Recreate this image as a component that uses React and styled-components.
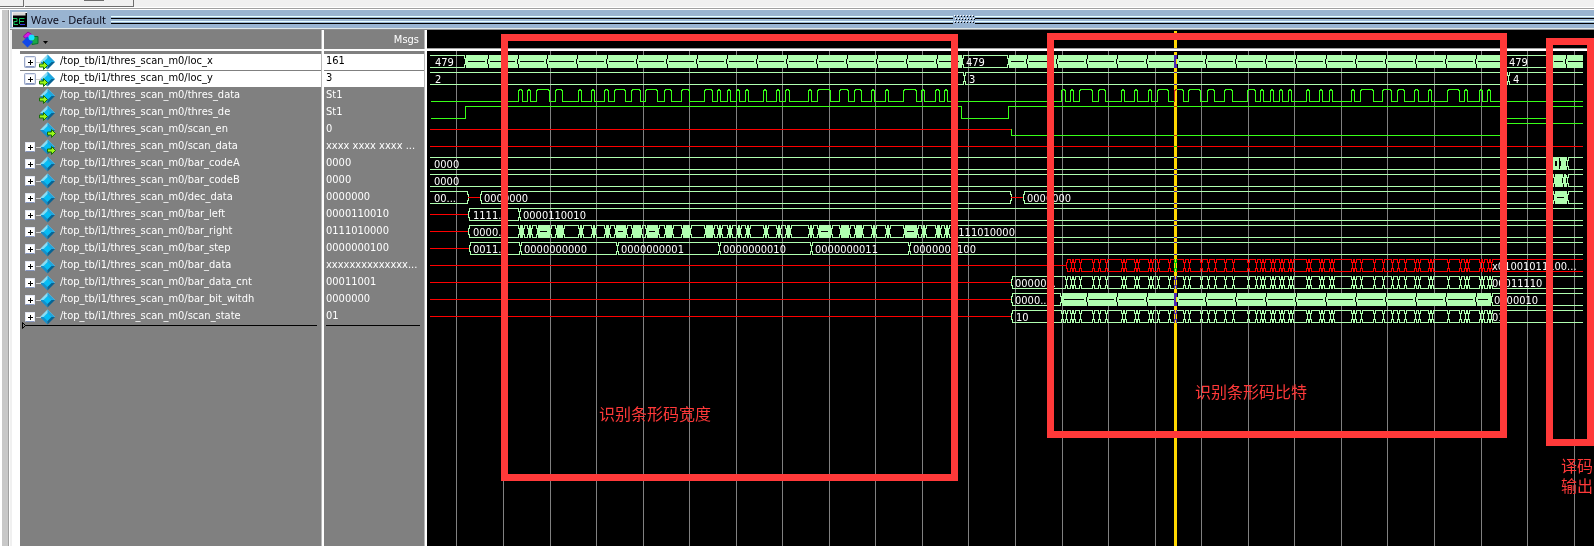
import React from "react";
import styled, { createGlobalStyle } from "styled-components";

const MINT = "#b0ffb0";
const GREEN = "#38ff18";
const RED = "#ff0000";
const UI_FONT = '"DejaVu Sans Condensed", "Noto Sans", sans-serif';

const GlobalStyle = createGlobalStyle`
  * { box-sizing: border-box; }
  body { margin: 0; background: #f0f0f0; font-family: ${UI_FONT}; font-size: 11px; overflow: hidden; }
`;

const Page = styled.div`
  display: flex;
  flex-direction: column;
  height: 100vh;
`;

const ToolStrip = styled.div`
  display: flex;
  gap: 1px;
  height: 8px;
  flex: none;
  border-bottom: 1px solid #fff;
`;

const ToolBox = styled.div`
  width: ${(p) => p.$width}px;
  height: 7px;
  border: solid #6e6e6e;
  border-width: 0 1px 1px 0;
  padding-left: ${(p) => p.$inset}px;
`;

const ToolMark = styled.div`
  width: 20px;
  height: 1px;
  background: #6e6e6e;
`;

const Workspace = styled.div`
  display: flex;
  flex: 1;
  min-height: 0;
  border-top: 1px solid #a0a0a0;
`;

const DockEdge = styled.div`
  width: 10px;
  flex: none;
  background: #c8c8c8;
  border: solid #fff;
  border-width: 1px 1px 0 2px;
  box-shadow: inset -1px 0 0 #a0a0a0;
`;

const WaveWindow = styled.section`
  display: flex;
  flex-direction: column;
  flex: 1;
  min-width: 0;
  border-top: 1px solid #fff;
`;

const TitleBar = styled.header`
  display: flex;
  align-items: center;
  height: 20px;
  flex: none;
  padding-left: 2px;
  background: #99b4d1;
  border-bottom: 1px solid #8c8c8c;
  box-shadow: inset 0 -1px 0 #e0e8e8;
`;

const TitleIcon = styled.svg`
  width: 15px;
  height: 15px;
  flex: none;
`;

const Title = styled.h1`
  margin: 0 5px 0 4px;
  font-size: 11px;
  line-height: 18px;
  font-weight: 400;
  font-family: "Noto Sans", sans-serif;
  white-space: nowrap;
  color: #0c0c1c;
`;

const Rails = styled.div`
  flex: ${(p) => p.$grow};
  height: 8px;
  background: linear-gradient(
    #e8ffff 0 1px, transparent 1px 2px, #000 2px 3px, transparent 3px 5px,
    #e8ffff 5px 6px, transparent 6px 7px, #000 7px 8px
  );
`;

const Panes = styled.div`
  display: flex;
  flex: 1;
  min-height: 0;
  padding-left: 2px;
`;

const SignalTable = styled.table`
  width: 415px;
  height: 100%;
  flex: none;
  table-layout: fixed;
  border-spacing: 0;
  background: #808080;
  color: #fff;
`;

const HeadCell = styled.th`
  height: 21px;
  padding: 0 6px 0 10px;
  border: solid #fff;
  border-width: 0 2px 2px 0;
  box-shadow: inset -1px 0 0 #b8b8b8;
  font-weight: 400;
  text-align: ${(p) => p.$align};
`;

const MenuButton = styled.button`
  display: flex;
  gap: 4px;
  padding: 0;
  border: 0;
  background: none;
`;

const Cell = styled.td`
  height: ${(p) => p.$height};
  padding: 0;
  vertical-align: top;
  border: solid #fff;
  border-width: 0 2px 0 ${(p) => (p.$gutter ? 8 : 0)}px;
  box-shadow: inset -1px 0 0 #b8b8b8;
`;

const Line = styled.div`
  display: flex;
  align-items: center;
  height: 17px;
  margin-right: 1px;
  padding-left: ${(p) => p.$inset}px;
  border-bottom: 1px solid #808080;
  white-space: nowrap;
  background: ${(p) => (p.$selected ? "#fff" : "#808080")};
  color: ${(p) => (p.$selected ? "#000" : "#fff")};
`;

const LineText = styled.span`
  align-self: flex-start;
  line-height: 14px;
`;

const Expander = styled.button`
  position: relative;
  width: 10px;
  height: 10px;
  flex: none;
  padding: 0;
  border: 1px solid #e4e8f4;
  border-bottom-color: #8898c0;
  border-radius: 1px;
  background:
    linear-gradient(#000, #000) center / 5px 1px no-repeat,
    linear-gradient(#000, #000) center / 1px 5px no-repeat,
    #fff;
  visibility: ${(p) => (p.$shown ? "visible" : "hidden")};
  box-shadow: 0 0 0 1px ${(p) => (p.$selected ? "#9aa8c8" : "transparent")};
  &::after {
    content: "";
    position: absolute;
    left: 10px;
    top: 4px;
    width: 5px;
    height: 1px;
    background: #d0d0d0;
  }
`;

const SignalIcon = styled.svg`
  width: 17px;
  height: 16px;
  flex: none;
  margin: 0 4px;
`;

const InsertLine = styled.div`
  position: relative;
  height: 1px;
  margin: -1px 5px 0 ${(p) => p.$inset}px;
  background: #000;
`;

const InsertMark = styled.svg`
  position: absolute;
  left: -3px;
  top: -3px;
  width: 4px;
  height: 7px;
`;

const WavePane = styled.main`
  position: relative;
  display: flex;
  flex-direction: column;
  flex: 1;
  min-width: 0;
  overflow: hidden;
  background: #000;
`;

const WaveHead = styled.div`
  height: 21px;
  flex: none;
  border-bottom: 2px solid #fff;
  box-shadow: inset 0 -1px 0 #a0a0a0;
`;

const CursorHead = styled.div`
  position: absolute;
  left: 747px;
  top: 1px;
  width: 3px;
  height: 17px;
  background: #ffd700;
`;

const WaveSvg = styled.svg`
  display: block;
  width: 100%;
  flex: 1;
  min-height: 0;
  background: #000;
`;

const Region = styled.div`
  position: absolute;
  left: ${(p) => p.$x}px;
  top: ${(p) => p.$y}px;
  width: ${(p) => p.$w}px;
  height: ${(p) => p.$h}px;
  border: 7px solid #ff3939;
`;

const Note = styled.div`
  position: absolute;
  left: ${(p) => p.$x}px;
  top: ${(p) => p.$y}px;
  color: #ff3939;
  font: 16px/20px "Liberation Sans", "Noto Sans CJK SC", sans-serif;
  white-space: nowrap;
`;

const signals = [
  ["loc_x", "161", "in", true],
  ["loc_y", "3", "in", true],
  ["thres_data", "St1", "in", false],
  ["thres_de", "St1", "in", false],
  ["scan_en", "0", "out", false],
  ["scan_data", "xxxx xxxx xxxx ...", "out", true],
  ["bar_codeA", "0000", "", true],
  ["bar_codeB", "0000", "", true],
  ["dec_data", "0000000", "", true],
  ["bar_left", "0000110010", "", true],
  ["bar_right", "0111010000", "", true],
  ["bar_step", "0000000100", "", true],
  ["bar_data", "xxxxxxxxxxxxxx...", "", true],
  ["bar_data_cnt", "00011001", "", true],
  ["bar_bit_witdh", "0000000", "", true],
  ["scan_state", "01", "", true],
];

const START = 430;
const END = 1583;
const gridLines = [
  456, 503, 550, 596, 643, 689, 736, 782, 829, 875, 922, 968, 1015, 1062, 1108,
  1155, 1201, 1248, 1294, 1341, 1387, 1434, 1481, 1527, 1574,
];
const firstScan = [
  [518, 522], [527, 530], [536, 549], [555, 562], [578, 581], [591, 594],
  [604, 608], [614, 625], [631, 640], [645, 657], [664, 671], [681, 689],
  [704, 712], [717, 720], [727, 730], [736, 739], [745, 748], [763, 766],
  [776, 779], [785, 789], [808, 811], [817, 830], [839, 848], [854, 861],
  [871, 874], [885, 888], [903, 916], [921, 924], [935, 939], [944, 947],
];
const secondScan = [
  [1061, 1065], [1070, 1073], [1079, 1092], [1098, 1105], [1121, 1124],
  [1134, 1137], [1148, 1151], [1157, 1168], [1174, 1183], [1188, 1200],
  [1207, 1214], [1224, 1232], [1247, 1255], [1260, 1263], [1270, 1273],
  [1279, 1282], [1288, 1291], [1306, 1309], [1319, 1322], [1329, 1332],
  [1351, 1354], [1360, 1373], [1382, 1391], [1397, 1404], [1414, 1418],
  [1428, 1431], [1447, 1459], [1464, 1467], [1479, 1482], [1487, 1490],
];
const notchesA = [488, 518, 547, 577, 607, 637, 667, 697, 727, 757, 787, 817, 847, 877, 907, 937];
const notchesB = [1087, 1117, 1147, 1177, 1206, 1236, 1266, 1296, 1326, 1356, 1386, 1416, 1446, 1476];

const rowTop = (row) => 55 + row * 17;
const secondEdges = secondScan.flat().map((x) => x + 1);

function Bus({ row, marks, color = MINT }) {
  const t = rowTop(row) + 0.5;
  const d = marks
    .slice(0, -1)
    .map((m, i) => {
      const a = m + 0.5;
      const b = marks[i + 1] + 0.5;
      return `M${a + 1} ${t}H${b - 1}V${t + 3}H${b}V${t + 9}H${b - 1}V${t + 12}H${a + 1}V${t + 9}H${a}V${t + 3}H${a + 1}Z`;
    })
    .join("");
  return <path d={d} fill="none" stroke={color} />;
}

function Dense({ row, from, to, notches = [] }) {
  const t = rowTop(row);
  const marks = [from, ...notches, to];
  return (
    <g>
      <rect x={from} y={t} width={to - from} height="13" fill={MINT} />
      {marks.slice(0, -1).map((m, i) =>
        marks[i + 1] - m > 8 ? (
          <rect key={m} x={m + 2} y={t + 6} width={marks[i + 1] - m - 5} height="1" />
        ) : null
      )}
      {notches.map((n) => (
        <path key={n} d={`M${n} ${t}h1v4h-1zM${n - 1} ${t + 4}h1v5h-1zM${n} ${t + 9}h1v4h-1z`} />
      ))}
    </g>
  );
}

function Unknown({ row, from, to }) {
  return <rect x={from} y={rowTop(row) + 6} width={to - from} height="1" fill={RED} />;
}

function Label({ row, x, children }) {
  return (
    <text x={x} y={rowTop(row) + 11} fill="#fff" fontSize="11" fontFamily={UI_FONT}>
      {children}
    </text>
  );
}

const pulsePath = (pulses) => {
  const hi = rowTop(2) + 0.5;
  return pulses
    .map(([a, b]) => `H${a + 0.5}V${hi + 1}H${a + 1.5}V${hi}H${b - 0.5}V${hi + 1}H${b + 0.5}V${hi + 12}`)
    .join("");
};

function Waves() {
  const gaps = firstScan.slice(0, -1).map(([, b], i) => [b + 1, firstScan[i + 1][0] + 1]);
  return (
    <WaveSvg role="img" aria-label="Signal waveforms">
      <g transform="translate(-427 -51)" shapeRendering="crispEdges">
        {gridLines.map((x) => (
          <rect key={x} x={x} y="51" width="1" height="3000" fill="#808080" />
        ))}
        <clipPath id="span">
          <rect x={START} y="51" width={END - START} height="400" />
        </clipPath>
        <g clipPath="url(#span)">
          <Bus row={0} marks={[420, 465]} />
          <Dense row={0} from={466} to={962} notches={notchesA} />
          <Bus row={0} marks={[962, 1008]} />
          <Dense row={0} from={1009} to={1505} notches={[1027, 1057, ...notchesB]} />
          <Bus row={0} marks={[1505, 1552]} />
          <Dense row={0} from={1552} to={1590} notches={[1566]} />
          <Bus row={1} marks={[420, 964, 1508, 1600]} />
          <path
            d={`M431 101.5${pulsePath(firstScan)}${pulsePath(secondScan)}H1583`}
            fill="none"
            stroke={GREEN}
          />
          <path
            d="M431 118.5H465.5V106.5H961.5V118.5H1008.5V106.5H1505.5V118.5H1550.5V106.5H1583M1011.5 129V135.5H1503.5V123.5H1583"
            fill="none"
            stroke={GREEN}
          />
          <Unknown row={4} from={430} to={1011} />
          <Unknown row={5} from={430} to={1583} />
          <Bus row={6} marks={[420, 1554, 1557, 1561, 1567, 1600]} />
          <Dense row={6} from={1553} to={1555} />
          <Dense row={6} from={1557} to={1559} />
          <Dense row={6} from={1561} to={1566} />
          <Bus row={7} marks={[420, 1554, 1563, 1565, 1567, 1600]} />
          <Dense row={7} from={1555} to={1562} />
          <Dense row={7} from={1564} to={1566} />
          <Bus row={8} marks={[420, 468]} />
          <Unknown row={8} from={468} to={480} />
          <Bus row={8} marks={[480, 1011]} />
          <Unknown row={8} from={1011} to={1023} />
          <Bus row={8} marks={[1023, 1554]} />
          <Dense row={8} from={1555} to={1567} />
          <Bus row={8} marks={[1567, 1600]} />
          <Unknown row={9} from={430} to={468} />
          <Bus row={9} marks={[468, 519, 1600]} />
          <Unknown row={10} from={430} to={468} />
          <Bus row={10} marks={[468, 519]} />
          {firstScan.map(([a, b]) => (
            <Dense key={a} row={10} from={a + 2} to={b + 1} />
          ))}
          {gaps.map(([a, b]) => (
            <Bus key={a} row={10} marks={[a, b]} />
          ))}
          <Bus row={10} marks={[948, 1600]} />
          <Unknown row={11} from={430} to={469} />
          <Bus row={11} marks={[469, 520, 617, 719, 811, 909, 1600]} />
          <Unknown row={12} from={430} to={1066} />
          <Bus row={12} marks={[...secondEdges.slice(1), 1600]} color={RED} />
          <Unknown row={13} from={430} to={1011} />
          <Bus row={13} marks={[1011, ...secondEdges.slice(1), 1600]} />
          <Unknown row={14} from={430} to={1011} />
          <Bus row={14} marks={[1011, 1061]} />
          <Dense row={14} from={1062} to={1491} notches={notchesB} />
          <Bus row={14} marks={[1491, 1600]} />
          <Unknown row={15} from={430} to={1011} />
          <Bus row={15} marks={[1011, ...secondEdges, 1600]} />
        </g>
        <Label row={0} x={435}>479</Label>
        <Label row={0} x={966}>479</Label>
        <Label row={0} x={1509}>479</Label>
        <Label row={1} x={435}>2</Label>
        <Label row={1} x={969}>3</Label>
        <Label row={1} x={1513}>4</Label>
        <Label row={6} x={434}>0000</Label>
        <Label row={7} x={434}>0000</Label>
        <Label row={8} x={434}>00...</Label>
        <Label row={8} x={484}>0000000</Label>
        <Label row={8} x={1027}>0000000</Label>
        <Label row={9} x={473}>1111...</Label>
        <Label row={9} x={523}>0000110010</Label>
        <Label row={10} x={473}>0000...</Label>
        <Label row={10} x={952}>0111010000</Label>
        <Label row={11} x={473}>0011...</Label>
        <Label row={11} x={524}>0000000000</Label>
        <Label row={11} x={621}>0000000001</Label>
        <Label row={11} x={723}>0000000010</Label>
        <Label row={11} x={815}>0000000011</Label>
        <Label row={11} x={913}>0000000100</Label>
        <Label row={12} x={1492}>x01001011100...</Label>
        <Label row={13} x={1015}>00000...</Label>
        <Label row={13} x={1492}>00011110</Label>
        <Label row={14} x={1015}>0000...</Label>
        <Label row={14} x={1494}>0000010</Label>
        <Label row={15} x={1016}>10</Label>
        <Label row={15} x={1492}>01</Label>
        <rect
          x="1174"
          y="52"
          width="3"
          height="3000"
          fill="#ffd700"
          style={{ mixBlendMode: "difference" }}
        />
      </g>
    </WaveSvg>
  );
}

function Diamond({ port }) {
  return (
    <SignalIcon viewBox="0 0 17 16" aria-hidden="true">
      <path d="M8.5 0.5 1 8h15z" fill="#8adcf4" />
      <path d="M8.5 0.5 16 8H8.5z" fill="#22a4dc" />
      <path d="M1 8h7.5v7.5z" fill="#1490cc" />
      <path d="M16 8H8.5v7.5z" fill="#086494" />
      <path d="M8.5 4 12.5 8l-4 4-4-4z" fill="#06bdf4" />
      {port && (
        <path
          transform={port === "in" ? "translate(0 7)" : "translate(8 7)"}
          d="M0.5 3h4V0.5L8.5 4.5l-4 4V6h-4z"
          fill="#9cf818"
          stroke="#187008"
          strokeWidth="1"
        />
      )}
    </SignalIcon>
  );
}

function Signals() {
  return (
    <SignalTable>
      <colgroup>
        <col style={{ width: 312 }} />
        <col />
      </colgroup>
      <thead>
        <tr>
          <HeadCell $align="left">
            <MenuButton type="button" aria-label="Signal display options">
              <svg width="17" height="17" viewBox="0 0 17 17">
                <path d="M9 5.500h7v7l-6 1z" fill="#18a848" stroke="#087030" />
                <path d="M1.500 5 6 1l4.500 3-2 3h-6z" fill="#d818e0" stroke="#901098" />
                <path d="M5.500 5.500 11 11l-5.500 5.500L0 11z" fill="#1048e8" />
                <circle cx="9.500" cy="6.500" r="3" fill="#18e0ff" />
              </svg>
              <svg width="5" height="17" viewBox="0 0 5 17">
                <path d="M0 10h5l-2.500 3z" />
              </svg>
            </MenuButton>
          </HeadCell>
          <HeadCell $align="right">Msgs</HeadCell>
        </tr>
      </thead>
      <tbody>
        <tr>
          <Cell $gutter $height="3px" />
          <Cell $height="3px" />
        </tr>
        {signals.map(([name, value, port, isBus], i) => (
          <tr key={name}>
            <Cell $gutter $height="17px">
              <Line $inset={5} $selected={i < 2}>
                <Expander type="button" aria-label={`Expand ${name}`} $shown={isBus} $selected={i < 2} />
                <Diamond port={port} />
                <LineText>/top_tb/i1/thres_scan_m0/{name}</LineText>
              </Line>
            </Cell>
            <Cell $height="17px">
              <Line $inset={2} $selected={i < 2}>
                <LineText>{value}</LineText>
              </Line>
            </Cell>
          </tr>
        ))}
        <tr>
          <Cell $gutter $height="auto">
            <InsertLine $inset={5}>
              <InsertMark viewBox="0 0 4 7" aria-hidden="true">
                <path d="M0.500 0.500 3.500 3.500l-3 3z" fill="#808080" stroke="#000" />
              </InsertMark>
            </InsertLine>
          </Cell>
          <Cell $height="auto">
            <InsertLine $inset={2} />
          </Cell>
        </tr>
      </tbody>
    </SignalTable>
  );
}

export default function App() {
  return (
    <Page>
      <GlobalStyle />
      <ToolStrip>
        <ToolBox $width={24} $inset={0} />
        <ToolBox $width={109} $inset={59}>
          <ToolMark />
        </ToolBox>
      </ToolStrip>
      <Workspace>
        <DockEdge />
        <WaveWindow>
          <TitleBar>
            <TitleIcon viewBox="0 0 15 15" aria-hidden="true">
              <rect width="15" height="15" fill="#000" />
              <path d="M0 15V0h15" fill="none" stroke="#f4f4f4" strokeWidth="2" />
              <path d="M1 2h12.500" stroke="#d8d8d8" strokeWidth="3" />
              <path d="M1 6.500h4v3H2v3h4M7.500 12V6.500h5M8 9.500h4" fill="none" stroke="#18c060" />
              <path d="M8 12.500h5" stroke="#3838e0" />
            </TitleIcon>
            <Title>Wave - Default</Title>
            <Rails $grow="843" />
            <svg width="22" height="9" viewBox="0 0 22 9" aria-hidden="true" shapeRendering="crispEdges">
              {[0, 1, 2, 3, 4, 5, 6].map((c) =>
                [0, 1, 2].map((r) => (
                  <g key={`${c}-${r}`}>
                    <rect x={c * 3 + 1 + (r % 2)} y={r * 3} width="1" height="1" fill="#fff" />
                    <rect x={c * 3 + 2 + (r % 2)} y={r * 3 + 1} width="1" height="1" />
                  </g>
                ))
              )}
            </svg>
            <Rails $grow="619" />
          </TitleBar>
          <Panes>
            <Signals />
            <WavePane>
              <WaveHead />
              <CursorHead />
              <Waves />
              <Region $x={74} $y={4} $w={457} $h={447} />
              <Region $x={620} $y={3} $w={460} $h={405} />
              <Region $x={1119} $y={8} $w={48} $h={408} />
              <Note $x={172} $y={375}>识别条形码宽度</Note>
              <Note $x={768} $y={353}>识别条形码比特</Note>
              <Note $x={1134} $y={427}>
                译码
                <br />
                输出
              </Note>
            </WavePane>
          </Panes>
        </WaveWindow>
      </Workspace>
    </Page>
  );
}
